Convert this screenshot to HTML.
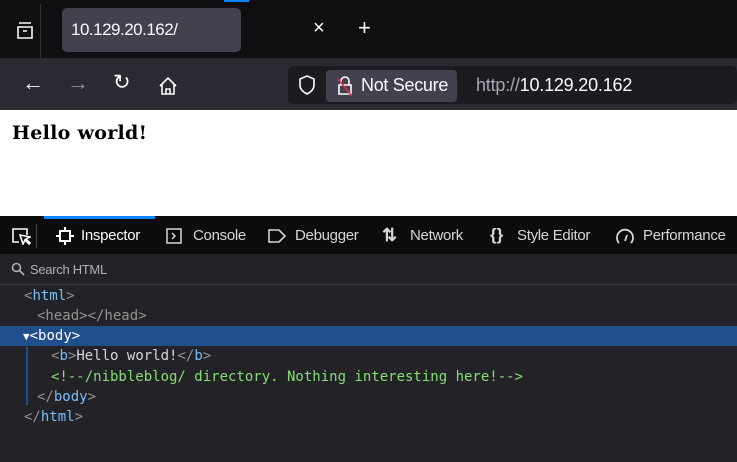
<!DOCTYPE html>
<html><head><style>
body{margin:0;width:737px;height:462px;overflow:hidden;background:#232327;font-family:"Liberation Sans",sans-serif;position:relative}
.a{position:absolute}
.mono{font-family:"DejaVu Sans Mono",monospace;font-size:14px;line-height:16px}
.t{color:#75bfff}.g{color:#939395}.c{color:#86de74}.w{color:#d7d7db}
.tb{font-size:15px;letter-spacing:-0.3px}
</style></head><body>
<div class="a" style="left:0;top:0;width:737px;height:58px;background:#0f0f12"></div>
<div class="a" style="left:224px;top:0;width:25px;height:2px;background:#0a84ff"></div>
<div class="a" style="left:40px;top:4px;width:1px;height:54px;background:#333"></div>
<svg class="a" style="left:16px;top:22px" width="18" height="18" viewBox="0 0 18 18" fill="none" stroke="#fbfbfe" stroke-width="1.6"><path d="M3 1h12M2 5h14v11H2z M7 9h4"/></svg>
<div class="a" style="left:62px;top:8px;width:179px;height:44px;background:#42414d;border-radius:5px"></div>
<div class="a" style="left:71px;top:20px;color:#fbfbfe;font-size:17px;letter-spacing:-0.5px">10.129.20.162/</div>
<div class="a" style="left:313px;top:17px;color:#fbfbfe;font-size:20px">×</div>
<div class="a" style="left:358px;top:15px;color:#fbfbfe;font-size:22px">+</div>
<div class="a" style="left:0;top:58px;width:737px;height:52px;background:#2b2a33"></div>
<div class="a" style="left:22px;top:70px;color:#fbfbfe;font-size:22px">←</div>
<div class="a" style="left:67px;top:70px;color:#8f8f9d;font-size:22px">→</div>
<div class="a" style="left:113px;top:70px;color:#fbfbfe;font-size:21px">↻</div>
<svg class="a" style="left:158px;top:76px" width="20" height="20" viewBox="0 0 20 20" fill="none" stroke="#fbfbfe" stroke-width="1.6"><path d="M2 10L10 2l8 8M4 8v10h12V8M8 18v-5h4v5"/></svg>
<div class="a" style="left:288px;top:66px;width:449px;height:38px;background:#1c1b22;border-radius:5px"></div>
<svg class="a" style="left:298px;top:75px" width="18" height="20" viewBox="0 0 18 20" fill="none" stroke="#fbfbfe" stroke-width="1.6"><path d="M9 1L2 4v6c0 4 3 7 7 9 4-2 7-5 7-9V4z"/></svg>
<div class="a" style="left:326px;top:70px;width:131px;height:32px;background:#42414d;border-radius:4px"></div>
<svg class="a" style="left:336px;top:75px" width="20" height="22" viewBox="0 0 20 22" fill="none" stroke-width="1.6"><path stroke="#fbfbfe" d="M5 10V6a4 4 0 018 0v4M3 10h12v9H3z"/><path stroke="#e22850" d="M2 4l14 17"/></svg>
<div class="a" style="left:361px;top:75px;color:#fbfbfe;font-size:18px;letter-spacing:-0.3px">Not Secure</div>
<div class="a" style="left:476px;top:75px;color:#fbfbfe;font-size:18px;letter-spacing:-0.2px"><span style="color:#a8a8b0">http://</span>10.129.20.162</div>
<div class="a" style="left:0;top:110px;width:737px;height:106px;background:#fff"></div>
<div class="a" style="left:12px;top:122px;font-family:'DejaVu Serif',serif;font-weight:bold;font-size:19px;letter-spacing:0.3px;color:#000">Hello world!</div>
<div class="a" style="left:0;top:216px;width:737px;height:38px;background:#0c0c0d"></div>
<div class="a" style="left:44px;top:216px;width:111px;height:3px;background:#0a84ff"></div>
<div class="a" style="left:36px;top:224px;width:1px;height:24px;background:#444"></div>
<svg class="a" style="left:11px;top:227px" width="20" height="18" viewBox="0 0 20 18" fill="none" stroke="#fbfbfe" stroke-width="1.6"><path d="M8 15H2V2h14v6M9 8l3 9 2-4 4 4 1-1-4-4 4-2z"/></svg>
<svg class="a" style="left:56px;top:227px" width="18" height="18" viewBox="0 0 18 18" fill="none" stroke="#fbfbfe" stroke-width="2"><path d="M4 4h10v10H4zM9 0v4M9 14v4M0 9h4M14 9h4"/></svg>
<div class="a tb" style="left:81px;top:227px;color:#fbfbfe">Inspector</div>
<svg class="a" style="left:165px;top:227px" width="18" height="18" viewBox="0 0 18 18" fill="none" stroke="#d7d7db" stroke-width="1.5"><path d="M2 2h14v14H2zM7 6l3 3-3 3"/></svg>
<div class="a w tb" style="left:193px;top:227px">Console</div>
<svg class="a" style="left:267px;top:227px" width="20" height="18" viewBox="0 0 20 18" fill="none" stroke="#d7d7db" stroke-width="1.6"><path d="M2 3h10l6 6-6 6H2z"/></svg>
<div class="a w tb" style="left:295px;top:227px">Debugger</div>
<div class="a w" style="left:382px;top:225px;font-size:18px;font-weight:bold">⇅</div>
<div class="a w tb" style="left:410px;top:227px">Network</div>
<div class="a w" style="left:490px;top:225px;font-size:17px;font-weight:bold">{}</div>
<div class="a w tb" style="left:517px;top:227px">Style Editor</div>
<svg class="a" style="left:615px;top:226px" width="20" height="20" viewBox="0 0 20 20" fill="none" stroke="#d7d7db" stroke-width="1.8"><path d="M4 17A8 8 0 1116 17M10 15l2-6"/></svg>
<div class="a w tb" style="left:643px;top:227px">Performance</div>
<div class="a" style="left:0;top:254px;width:737px;height:30px;background:#232327;border-bottom:1px solid #38383d"></div>
<svg class="a" style="left:11px;top:262px" width="14" height="14" viewBox="0 0 14 14" fill="none" stroke="#b1b1b3" stroke-width="1.6"><circle cx="5.5" cy="5.5" r="4"/><path d="M8.5 8.5L13 13"/></svg>
<div class="a" style="left:30px;top:262px;font-size:13px;color:#b1b1b3;letter-spacing:-0.3px">Search HTML</div>
<div class="a" style="left:0;top:326px;width:737px;height:20px;background:#204e8a"></div>
<div class="a" style="left:26px;top:347px;width:2px;height:58px;background:#204e8a"></div>
<div class="a mono" style="left:24px;top:288px"><span class="g">&lt;</span><span class="t">html</span><span class="g">&gt;</span></div>
<div class="a mono g" style="left:37px;top:308px">&lt;head&gt;&lt;/head&gt;</div>
<div class="a mono" style="left:23px;top:328px;color:#fff"><span style="font-size:11px">▼</span>&lt;body&gt;</div>
<div class="a mono" style="left:51px;top:348px"><span class="g">&lt;</span><span class="t">b</span><span class="g">&gt;</span><span class="w">Hello world!</span><span class="g">&lt;/</span><span class="t">b</span><span class="g">&gt;</span></div>
<div class="a mono c" style="left:51px;top:369px">&lt;!--/nibbleblog/ directory. Nothing interesting here!--&gt;</div>
<div class="a mono" style="left:37px;top:389px"><span class="g">&lt;/</span><span class="t">body</span><span class="g">&gt;</span></div>
<div class="a mono" style="left:24px;top:409px"><span class="g">&lt;/</span><span class="t">html</span><span class="g">&gt;</span></div>
</body></html>
